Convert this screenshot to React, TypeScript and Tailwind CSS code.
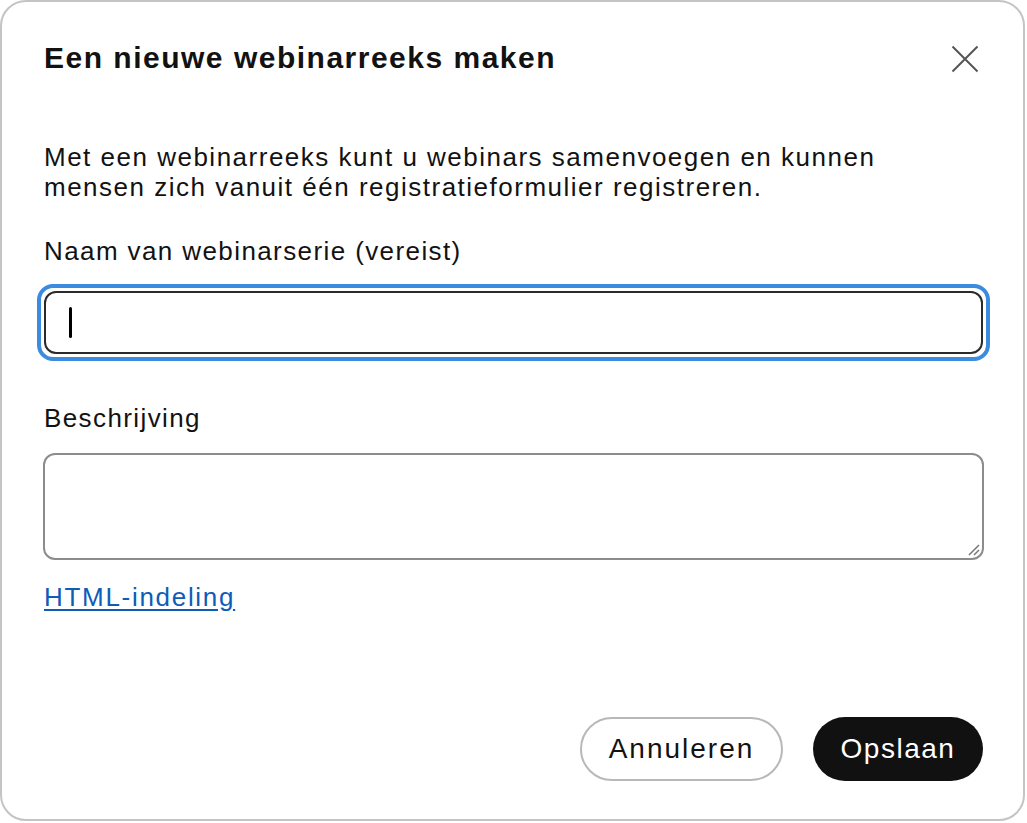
export default function App() {
  return (
    <div className="h-[823px] w-[1027px] bg-white font-['Liberation_Sans',Arial,sans-serif] text-[#121212]">
      <div className="flex h-[821px] w-[1025px] flex-col rounded-[26px] border-2 border-[#c4c4c4] bg-white">
        <div className="flex items-start justify-between pl-[42px] pr-[44px] pt-[39px]">
          <h1 className="text-[30px] font-bold leading-[34px] tracking-[1.5px]">Een nieuwe webinarreeks maken</h1>
          <button className="mt-[4px] text-[#555]">
            <svg width="28" height="28" viewBox="0 0 28 28">
              <path d="M1.5 1.5 L26.5 26.5 M26.5 1.5 L1.5 26.5" stroke="currentColor" strokeWidth="2" />
            </svg>
          </button>
        </div>

        <p className="mt-[67px] pl-[42px] pr-[40px] text-[26px] leading-[30px] tracking-[1.5px]">
          Met een webinarreeks kunt u webinars samenvoegen en kunnen
          <br />
          mensen zich vanuit één registratieformulier registreren.
        </p>

        <label className="mt-[34px] pl-[42px] text-[26px] leading-[30px] tracking-[1.4px]">
          Naam van webinarserie (vereist)
        </label>
        <div className="ml-[35px] mr-[33px] mt-[18px] rounded-[16px] border-[4px] border-[#3b8be0] p-[3px]">
          <div className="flex h-[63px] items-center rounded-[12px] border-2 border-[#2a2a2a] px-[23px]">
            <span className="h-[31px] w-[3px] rounded bg-black" />
          </div>
        </div>

        <label className="mt-[42px] pl-[42px] text-[26px] leading-[30px] tracking-[1.4px]">Beschrijving</label>
        <div className="relative ml-[41px] mr-[39px] mt-[20px] h-[107px] rounded-[12px] border-2 border-[#8c8c8c]">
          <svg className="absolute bottom-[2px] right-[2px]" width="14" height="14" viewBox="0 0 14 14">
            <path d="M3 13 L13 3 M8 13 L13 8" stroke="#777" strokeWidth="1.5" />
          </svg>
        </div>

        <a
          href="#"
          className="mt-[22px] self-start pl-[42px] text-[26px] leading-[30px] tracking-[1.7px] text-[#0d5cb8] underline underline-offset-[3px]"
        >
          HTML-indeling
        </a>

        <div className="mt-auto flex justify-end gap-[30px] pb-[38px] pr-[40px]">
          <button className="h-[64px] w-[203px] rounded-full border-2 border-[#b8b8b8] text-[28px] tracking-[2px] text-[#121212]">
            Annuleren
          </button>
          <button className="h-[64px] w-[170px] rounded-full bg-[#111111] text-[28px] tracking-[1.5px] text-white">
            Opslaan
          </button>
        </div>
      </div>
    </div>
  );
}
